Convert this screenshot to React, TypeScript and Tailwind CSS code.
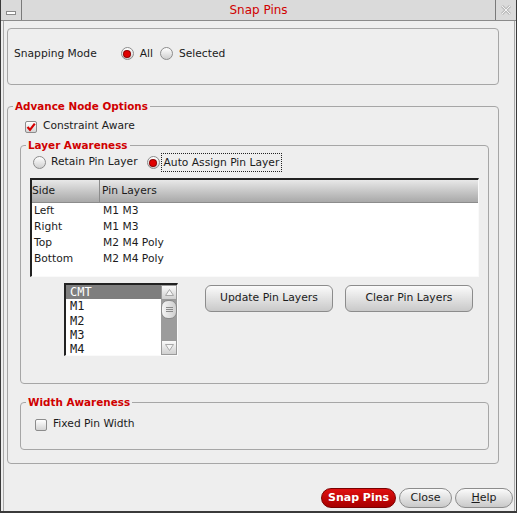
import type { ReactNode } from "react";

const Checkbox = ({ checked }: { checked: boolean }) => (
  <span className="relative flex h-[12px] w-[12px] items-center justify-center rounded-[2px] border border-[#8c8c8c] bg-linear-to-b from-[#ffffff] to-[#d4d4d4]">
    {checked && (
      <svg width="10" height="10" viewBox="0 0 10 10">
        <path d="M1.5 5 L4 7.8 L8.8 1.6" fill="none" stroke="#d40000" strokeWidth="2.2" />
      </svg>
    )}
  </span>
);

const Radio = ({ checked }: { checked: boolean }) => (
  <span className="flex h-[13px] w-[13px] items-center justify-center rounded-full border border-[#8c8c8c] bg-linear-to-b from-[#ffffff] to-[#cfcfcf]">
    {checked && <span className="h-[6px] w-[6px] rounded-full bg-[#e00000] ring-1 ring-[#900000]" />}
  </span>
);

const Group = ({
  title,
  className,
  children,
}: {
  title: string;
  className: string;
  children: ReactNode;
}) => (
  <fieldset className={`rounded-[4px] border border-[#a6a6a6] ${className}`}>
    <legend className="ml-[5px] px-[2px] text-[10.4px] leading-[13px] font-bold text-[#d00000]">
      {title}
    </legend>
    {children}
  </fieldset>
);

const rows = [
  ["Left", "M1 M3"],
  ["Right", "M1 M3"],
  ["Top", "M2 M4 Poly"],
  ["Bottom", "M2 M4 Poly"],
];

const layers = ["CMT", "M1", "M2", "M3", "M4"];

const GrayButton = ({ children, className }: { children: ReactNode; className: string }) => (
  <button
    className={`flex items-center justify-center rounded-[6px] border border-[#8c8c8c] bg-linear-to-b from-[#fbfbfb] to-[#c9c9c9] text-[10.8px] text-[#1b1b1b] ${className}`}
  >
    {children}
  </button>
);

const App = () => {
  return (
    <div className="flex h-[513px] w-[517px] flex-col overflow-hidden border-x border-b-2 border-[#3a3a3a] bg-[#eeeeee] font-['DejaVu_Sans',sans-serif] text-[10.7px] text-[#1b1b1b]">
      {/* title bar */}
      <div className="flex h-[21px] shrink-0 border-b border-[#8a8a8a] bg-[#dadada]">
        <div className="flex w-[21px] items-center justify-center border-r border-[#7a7a7a] pt-[5px]">
          <span className="h-[4px] w-[10px] border border-[#8a8a8a] bg-white" />
        </div>
        <div className="flex flex-1 items-center justify-center text-[12px] text-[#d00000]">Snap Pins</div>
        <div className="flex w-[21px] items-center justify-center border-l border-[#7a7a7a]">
          <svg width="12" height="12" viewBox="0 0 12 12">
            <path d="M2 2 L10 10 M10 2 L2 10" stroke="#bcbcbc" strokeWidth="3" />
            <path d="M2 2 L10 10 M10 2 L2 10" stroke="#f4f4f4" strokeWidth="1" />
          </svg>
        </div>
      </div>

      <div className="ml-[2px] mr-[1px] flex flex-1 flex-col border-x border-[#a9a9a9] pl-[3px]">
        {/* snapping mode */}
        <div className="mt-[7px] flex h-[57px] w-[492px] items-center rounded-[4px] border border-[#a6a6a6] pb-[5px] pl-[6px]">
          <span>Snapping Mode</span>
          <span className="ml-[24px] flex items-center gap-[6px]">
            <Radio checked />
            All
          </span>
          <span className="ml-[7px] flex items-center gap-[6px]">
            <Radio checked={false} />
            Selected
          </span>
        </div>

        <Group title="Advance Node Options" className="mt-[15px] w-[492px] pb-[13px]">
          <div className="mt-[7px] ml-[17px] flex h-[13px] items-center gap-[6px]">
            <Checkbox checked />
            Constraint Aware
          </div>

          <Group title="Layer Awareness" className="mt-[6px] ml-[12px] w-[469px] pb-[27px]">
            <div className="mt-[1px] flex h-[19px] items-center pl-[12px]">
              <span className="flex items-center gap-[5px]">
                <Radio checked={false} />
                Retain Pin Layer
              </span>
              <span className="ml-[9px] flex items-center gap-[1px]">
                <Radio checked />
                <span className="border border-dotted border-[#222] px-[2px] leading-[17px]">Auto Assign Pin Layer</span>
              </span>
            </div>

            {/* table */}
            <div className="mt-[6px] ml-[9px] flex h-[99px] w-[449px] flex-col border-t-2 border-r border-b border-l-2 border-t-[#222] border-r-[#fafafa] border-b-[#fafafa] border-l-[#222] bg-white">
              <div className="flex h-[23px] shrink-0 border-b border-[#8c8c8c] bg-linear-to-b from-[#e8e8e8] to-[#a9a9a9]">
                <div className="flex w-[68px] items-center border-r border-[#8c8c8c]">Side</div>
                <div className="flex items-center pl-[2px]">Pin Layers</div>
              </div>
              <div>
                {rows.map(([side, pins]) => (
                  <div key={side} className="flex h-[16px] items-center">
                    <span className="w-[69px] pl-[2px]">{side}</span>
                    <span className="pl-[2px]">{pins}</span>
                  </div>
                ))}
              </div>
            </div>

            <div className="mt-[6px] flex items-start">
              <div className="ml-[43px] flex h-[73px] w-[114px] border-t-2 border-r border-b border-l-2 border-t-[#222] border-r-[#fafafa] border-b-[#fafafa] border-l-[#222] bg-white">
                <div className="flex-1 font-['DejaVu_Sans_Mono',monospace] text-[12px]">
                  {layers.map((l, i) => (
                    <div
                      key={l}
                      className={`h-[14.3px] pl-[4px] leading-[14.3px] ${i === 0 ? "bg-[#7e7e7e] text-white" : ""}`}
                    >
                      {l}
                    </div>
                  ))}
                </div>
                <div className="flex w-[16px] flex-col bg-[#9c9c9c]">
                  <div className="flex h-[15px] items-center justify-center border border-[#9a9a9a] bg-linear-to-b from-[#fafafa] to-[#d0d0d0]">
                    <svg width="9" height="7" viewBox="0 0 9 7">
                      <path d="M0.5 6.5 L4.5 0.5 L8.5 6.5 Z" fill="#f4f4f4" stroke="#a8a8a8" />
                    </svg>
                  </div>
                  <div className="flex h-[19px] items-center justify-center rounded-[7px] border border-[#8a8a8a] bg-linear-to-r from-[#f4f4f4] to-[#cfcfcf]">
                    <svg width="7" height="6" viewBox="0 0 7 6">
                      <path d="M0 0.5 H7 M0 2.5 H7 M0 4.5 H7" stroke="#8a8a8a" />
                    </svg>
                  </div>
                  <div className="flex-1" />
                  <div className="flex h-[15px] items-center justify-center border border-[#9a9a9a] bg-linear-to-b from-[#fafafa] to-[#d0d0d0]">
                    <svg width="9" height="7" viewBox="0 0 9 7">
                      <path d="M0.5 0.5 L4.5 6.5 L8.5 0.5 Z" fill="#f4f4f4" stroke="#a8a8a8" />
                    </svg>
                  </div>
                </div>
              </div>
              <GrayButton className="mt-[2px] ml-[27px] h-[27px] w-[128px]">Update Pin Layers</GrayButton>
              <GrayButton className="mt-[2px] ml-[12px] h-[27px] w-[128px]">Clear Pin Layers</GrayButton>
            </div>
          </Group>

          <Group title="Width Awareness" className="mt-[12px] ml-[12px] w-[469px] pb-[18px]">
            <div className="mt-[9px] ml-[14px] flex h-[13px] items-center gap-[6px]">
              <Checkbox checked={false} />
              Fixed Pin Width
            </div>
          </Group>
        </Group>

        <div className="mt-auto mb-[3px] flex justify-end gap-[3px] pr-[1px]">
          <button className="h-[20px] w-[75px] rounded-full border border-[#7a0000] bg-linear-to-b from-[#e01010] to-[#a80000] text-[11px] font-bold text-white">
            Snap Pins
          </button>
          <button className="h-[20px] w-[53px] rounded-full border border-[#8c8c8c] bg-linear-to-b from-[#fbfbfb] to-[#c9c9c9] text-[11px]">
            Close
          </button>
          <button className="h-[20px] w-[58px] rounded-full border border-[#8c8c8c] bg-linear-to-b from-[#fbfbfb] to-[#c9c9c9] text-[11px]">
            <span className="underline">H</span>elp
          </button>
        </div>
      </div>
    </div>
  );
};

export default App;
